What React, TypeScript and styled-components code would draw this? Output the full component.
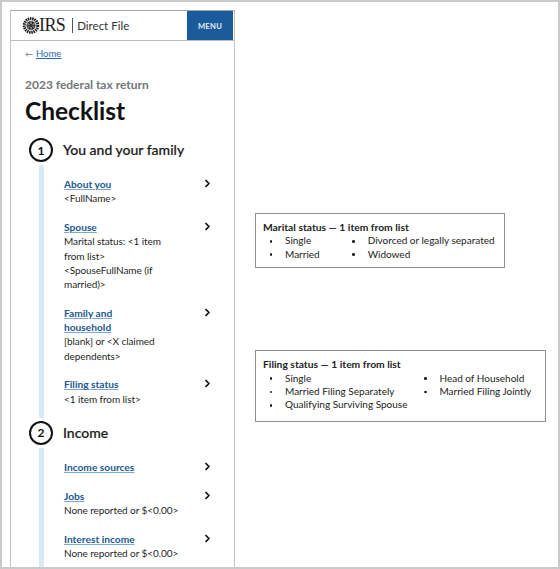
import React from "react";
import styled, { createGlobalStyle } from "styled-components";

const Global = createGlobalStyle`
  html, body { margin: 0; padding: 0; background: #fff; }
  body { font-family: "Lato", "Noto Sans", sans-serif; }
  * { box-sizing: border-box; }
`;

const Frame = styled.div`
  width: 560px;
  height: 569px;
  overflow: hidden;
  border: 2px solid #c9c9c9;
  padding: 8px 0 0 8px;
  display: flex;
  align-items: flex-start;
  background: #fff;
`;

const Phone = styled.div`
  width: 225px;
  height: 570px;
  flex: none;
  border: 1px solid #c4c4c4;
  border-top-color: #a8a8a8;
  overflow: hidden;
`;

const Header = styled.header`
  height: 30px;
  display: flex;
  align-items: stretch;
  border-bottom: 1px solid #bcbcbc;
`;

const Brand = styled.div`
  flex: 1;
  display: flex;
  align-items: center;
  padding-left: 11px;
`;

const IrsWord = styled.span`
  font-family: "Liberation Serif", serif;
  font-size: 18px;
  letter-spacing: -0.6px;
  color: #1f1f1f;
  margin-left: -1px;
`;

const Divider = styled.span`
  width: 1px;
  height: 15px;
  background: #555;
  margin: 0 4px 0 7px;
`;

const Product = styled.span`
  font-size: 11.5px;
  color: #333;
`;

const MenuButton = styled.div`
  width: 46px;
  margin-right: 1px;
  background: #1b5a9b;
  color: #e8eef5;
  font-size: 7.6px;
  font-weight: 700;
  letter-spacing: 0.3px;
  display: flex;
  align-items: center;
  justify-content: center;
`;

const Crumb = styled.div`
  margin: 7px 0 0 14px;
  font-size: 9.5px;
  line-height: 12px;
  color: #71767a;
  display: flex;
  gap: 1px;
`;

const CrumbArrow = styled.span`
  width: 10px;
  font-size: 8px;
`;

const CrumbLink = styled.a`
  color: #2e6cb0;
  text-decoration: underline;
`;

const Eyebrow = styled.div`
  margin: 18px 0 0 14px;
  font-size: 12px;
  line-height: 14px;
  font-weight: 700;
  color: #71767a;
`;

const Title = styled.h1`
  margin: 4px 0 12px 14px;
  font-size: 24.5px;
  line-height: 30px;
  font-weight: 700;
  color: #111;
`;

const Section = styled.div`
  display: flex;
  flex-direction: column;
`;

const StepHead = styled.div`
  display: flex;
  align-items: center;
  gap: 10px;
  height: 24px;
  padding-left: 18px;
`;

const Circle = styled.span`
  width: 24px;
  height: 24px;
  flex: none;
  border: 2.5px solid #111;
  border-radius: 50%;
  display: flex;
  align-items: center;
  justify-content: center;
  font-size: 12px;
  font-weight: 700;
  color: #111;
`;

const StepTitle = styled.h2`
  margin: -1px 0 0;
  font-size: 14px;
  font-weight: 500;
  color: #1b1b1b;
  -webkit-text-stroke: 0.2px #1b1b1b;
`;

const Items = styled.div<{ $top: number; $bottom: number }>`
  margin-left: 28px;
  border-left: 5px solid #d9e8f6;
  padding: ${(p) => p.$top}px 0 ${(p) => p.$bottom}px 20px;
  margin-top: 3px;
  margin-bottom: 3px;
  display: flex;
  flex-direction: column;
  gap: 14.5px;
`;

const Item = styled.div`
  display: flex;
  align-items: flex-start;
  position: relative;
`;

const ItemText = styled.div`
  width: 132px;
  flex: none;
  font-size: 10px;
  letter-spacing: -0.08px;
  line-height: 14.25px;
  color: #1f1f1f;
  white-space: nowrap;
`;

const ItemLink = styled.a`
  display: block;
  font-size: 10.2px;
  letter-spacing: 0;
  font-weight: 700;
  color: #20588f;
  text-decoration: underline;
  text-decoration-color: #7ea7d2;
`;

const Chevron = styled.svg`
  width: 7px;
  height: 9px;
  margin: 2px 0 0 8px;
  flex: none;
`;

const Notes = styled.div`
  flex: 1;
  padding: 203px 0 0 20px;
  display: flex;
  flex-direction: column;
  align-items: flex-start;
  gap: 82px;
`;

const NoteBox = styled.section<{ $w: number; $bottom: number }>`
  width: ${(p) => p.$w}px;
  border: 1px solid #8f8f8f;
  padding: 7px 7px ${(p) => p.$bottom}px;
  font-size: 10px;
  line-height: 13.4px;
  color: #222;
`;

const NoteTitle = styled.div`
  font-weight: 700;
  font-size: 10.3px;
`;

const Columns = styled.div<{ $gap: number }>`
  display: flex;
  column-gap: ${(p) => p.$gap}px;
`;

const BulletList = styled.ul`
  list-style: none;
  margin: 0;
  padding: 0;
`;

const Bullet = styled.li`
  padding-left: 22px;
  position: relative;
  white-space: nowrap;
  &::before {
    content: "";
    position: absolute;
    left: 6.5px;
    top: 5.5px;
    width: 2.6px;
    height: 2.6px;
    background: #222;
    border-radius: 50%;
  }
`;

const Seal = () => (
  <svg width="18" height="17" viewBox="0 0 18 17" aria-hidden="true">
    <circle cx="9" cy="8.5" r="6.8" fill="none" stroke="#1c1c1c" strokeWidth="3" strokeDasharray="1.5 0.7" />
    <circle cx="9" cy="8.5" r="4.6" fill="#3a3a3a" />
    <path d="M5.2 7h7.6M5.6 10h6.8M9 4.4v8.2" stroke="#cfcfcf" strokeWidth="0.8" />
    <path d="M7 5.5l4 6M11 5.5l-4 6" stroke="#111" strokeWidth="0.9" />
  </svg>
);

const Next = () => (
  <Chevron viewBox="0 0 7 9" aria-hidden="true">
    <path d="M1.5 1l3.4 3.5L1.5 8" fill="none" stroke="#111" strokeWidth="1.7" />
  </Chevron>
);

const Row = ({ title, lines = [] }: { title: string | string[]; lines?: string[] }) => (
  <Item>
    <ItemText>
      <ItemLink href="#">{Array.isArray(title) ? title.map((t) => <div key={t}>{t}</div>) : title}</ItemLink>
      {lines.map((l) => (
        <div key={l}>{l}</div>
      ))}
    </ItemText>
    <Next />
  </Item>
);

const List = ({ items }: { items: string[] }) => (
  <BulletList>
    {items.map((i) => (
      <Bullet key={i}>{i}</Bullet>
    ))}
  </BulletList>
);

export default function App() {
  return (
    <>
      <Global />
      <Frame>
        <Phone>
          <Header>
            <Brand>
              <Seal />
              <IrsWord>IRS</IrsWord>
              <Divider />
              <Product>Direct File</Product>
            </Brand>
            <MenuButton>MENU</MenuButton>
          </Header>
          <Crumb>
            <CrumbArrow>←</CrumbArrow>
            <CrumbLink href="#">Home</CrumbLink>
          </Crumb>
          <Eyebrow>2023 federal tax return</Eyebrow>
          <Title>Checklist</Title>
          <Section>
            <StepHead>
              <Circle>1</Circle>
              <StepTitle>You and your family</StepTitle>
            </StepHead>
            <Items $top={12} $bottom={12}>
              <Row title="About you" lines={["<FullName>"]} />
              <Row
                title="Spouse"
                lines={["Marital status: <1 item", "from list>", "<SpouseFullName (if", "married)>"]}
              />
              <Row title={["Family and", "household"]} lines={["[blank] or <X claimed", "dependents>"]} />
              <Row title="Filing status" lines={["<1 item from list>"]} />
            </Items>
            <StepHead>
              <Circle>2</Circle>
              <StepTitle>Income</StepTitle>
            </StepHead>
            <Items $top={12} $bottom={40}>
              <Row title="Income sources" />
              <Row title="Jobs" lines={["None reported or $<0.00>"]} />
              <Row title="Interest income" lines={["None reported or $<0.00>"]} />
            </Items>
          </Section>
        </Phone>
        <Notes>
          <NoteBox $w={250} $bottom={6}>
            <NoteTitle>Marital status — 1 item from list</NoteTitle>
            <Columns $gap={26}>
              <List items={["Single", "Married"]} />
              <List items={["Divorced or legally separated", "Widowed"]} />
            </Columns>
          </NoteBox>
          <NoteBox $w={291} $bottom={9}>
            <NoteTitle>Filing status — 1 item from list</NoteTitle>
            <Columns $gap={10}>
              <List items={["Single", "Married Filing Separately", "Qualifying Surviving Spouse"]} />
              <List items={["Head of Household", "Married Filing Jointly"]} />
            </Columns>
          </NoteBox>
        </Notes>
      </Frame>
    </>
  );
}
